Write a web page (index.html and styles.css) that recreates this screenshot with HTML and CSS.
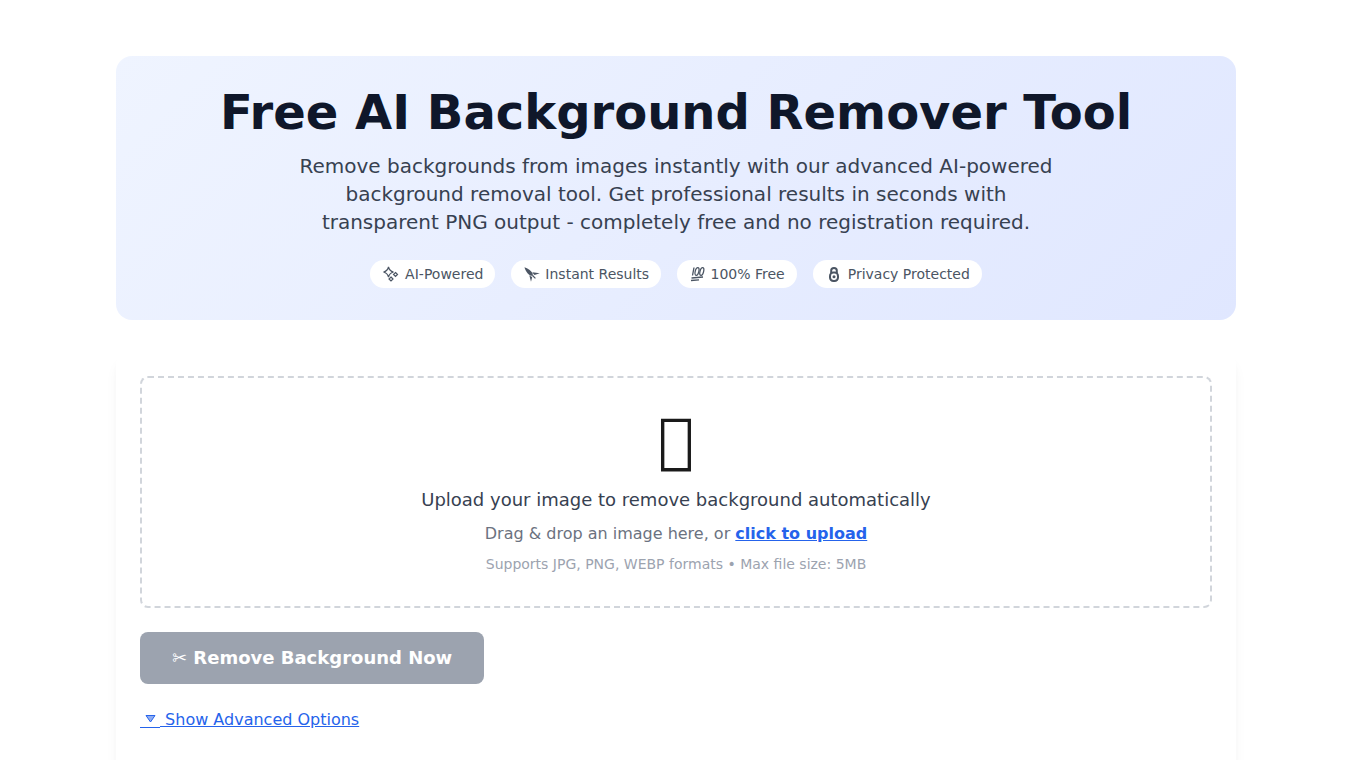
FILE: index.html
```html
<!DOCTYPE html>
<html lang="en">
<head>
<meta charset="utf-8">
<meta name="viewport" content="width=device-width, initial-scale=1.0">
<title>Free AI Background Remover Tool</title>
<link rel="stylesheet" href="styles.css">
</head>
<body>
<div class="page">
  <header class="hero">
    <h1>Free AI Background Remover Tool</h1>
    <p class="lead">Remove backgrounds from images instantly with our advanced AI-powered background removal tool. Get professional results in seconds with transparent PNG output - completely free and no registration required.</p>
    <div class="badges">
      <span class="badge"><svg class="ico ico-wide" viewBox="0 0 18.5 16" fill="none" stroke="currentColor" stroke-width="1.2"><path d="M6.500 1 Q7.500 5 11.500 6 Q7.500 7 6.500 11 Q5.500 7 1.500 6 Q5.500 5 6.500 1Z"/><path d="M13.500 6.500 L15.500 8.500 L13.500 10.500 L11.500 8.500Z"/><path d="M9 11 L11 13 L9 15 L7 13Z"/></svg> AI-Powered</span>
      <span class="badge"><svg class="ico ico-rocket" viewBox="0 0 17.500 16" fill="currentColor"><path d="M1.500 1.300 C4.500 2.200 8.500 4.800 10 8.200 L8.200 10 C4.800 8.500 2.200 4.500 1.500 1.300Z"/><path d="M9.300 6.300 L16.800 7.200 L11.500 9 L10.500 8Z"/><path d="M6.300 9.300 L8 15.700 L9.200 11 L8 10.500Z"/><path d="M9.800 8.800 L12.800 12 L12 12.800 L8.800 9.800Z"/></svg> Instant Results</span>
      <span class="badge"><svg class="ico" viewBox="0 0 17 16" fill="none" stroke="currentColor" stroke-width="1.300"><path d="M5 1.500 L3.500 9.500"/><ellipse cx="8" cy="5.500" rx="1.800" ry="4" transform="rotate(14 8 5.500)"/><ellipse cx="12.800" cy="5.500" rx="1.800" ry="4" transform="rotate(14 12.800 5.500)"/><path d="M2.500 12 L14 11"/><path d="M2 14.500 L10 13.800"/></svg> 100% Free</span>
      <span class="badge"><svg class="ico ico-lock" viewBox="0 0 18.500 16" fill="none" stroke="currentColor" stroke-width="2"><path d="M6.200 7 V4.500 C6.200 1 11.800 1 11.800 4.500 V7"/><rect x="5" y="6.500" width="8" height="8.500" rx="3.400"/><circle cx="9" cy="10.700" r="1.500" fill="currentColor" stroke="none"/></svg> Privacy Protected</span>
    </div>
  </header>
  <main class="card">
    <div class="dropzone">
      <div class="drop-icon">&#xE123;</div>
      <p class="drop-title">Upload your image to remove background automatically</p>
      <p class="drop-text">Drag &amp; drop an image here, or <a href="#" class="upload-link">click to upload</a></p>
      <p class="drop-note">Supports JPG, PNG, WEBP formats • Max file size: 5MB</p>
    </div>
    <button class="go-btn" type="button" disabled>&#x2702;&#xFE0E; Remove Background Now</button>
    <a href="#" class="adv-link"><svg class="ico-down" viewBox="0 0 20 15"><path d="M6 2.500 H15 L10.500 9Z" fill="#8fadf2" stroke="currentColor" stroke-width="1"/><path d="M0 14.500 H20" stroke="currentColor" stroke-width="1"/></svg> Show Advanced Options</a>
  </main>
</div>
</body>
</html>
```

FILE: styles.css
```css
* { box-sizing: border-box; }
html, body { height: 100%; }
body {
  margin: 0;
  background: #fff;
  color: #111827;
  font-family: "DejaVu Sans", sans-serif;
  overflow: hidden;
}
p { margin: 0; }
.page {
  width: 1120px;
  margin: 0 auto;
  padding-top: 56px;
}
.hero {
  height: 264px;
  padding: 32px;
  text-align: center;
  border-radius: 16px;
  background: linear-gradient(135deg, #eff4ff, #e0e7ff);
}
.hero h1 {
  margin: 0 0 16px;
  font-size: 48px;
  line-height: 48px;
  font-weight: 700;
  color: #0f172a;
}
.lead {
  max-width: 768px;
  margin: 0 auto 24px;
  font-size: 20px;
  line-height: 28px;
  color: #374151;
}
.badges {
  display: flex;
  justify-content: center;
  gap: 16px;
}
.badge {
  padding: 4px 12px;
  border-radius: 999px;
  background: #fff;
  font-size: 14px;
  line-height: 20px;
  color: #4b5563;
}
.ico {
  width: 17px;
  height: 16px;
  vertical-align: -3px;
}
.ico-wide { width: 18.5px; }
.ico-rocket { width: 17.5px; }
.ico-lock { width: 18.5px; }
.card {
  margin-top: 32px;
  padding: 24px;
  height: 600px;
  border-radius: 12px;
  background: #fff;
  box-shadow: 0 10px 15px -3px rgba(0, 0, 0, 0.06), 0 4px 6px -2px rgba(0, 0, 0, 0.03);
}
.dropzone {
  height: 232px;
  padding: 32px;
  text-align: center;
  border: 2px dashed #d1d5db;
  border-radius: 8px;
}
.drop-icon {
  font-size: 60px;
  line-height: 60px;
  margin-bottom: 16px;
  color: #1a1a1a;
}
.drop-title {
  font-size: 18px;
  line-height: 28px;
  color: #374151;
  margin-bottom: 8px;
}
.drop-text {
  font-size: 16px;
  line-height: 24px;
  color: #6b7280;
  margin-bottom: 8px;
}
.upload-link {
  font-weight: 700;
  color: #2563eb;
}
.drop-note {
  font-size: 14px;
  line-height: 20px;
  color: #9ca3af;
}
.go-btn {
  display: block;
  margin-top: 24px;
  padding: 0 32px 2px;
  height: 52px;
  border: 0;
  border-radius: 8px;
  background: #9ca3af;
  color: #fff;
  font-family: inherit;
  font-size: 18px;
  font-weight: 700;
}
.adv-link {
  display: inline-block;
  margin-top: 24px;
  font-size: 16px;
  line-height: 24px;
  color: #2563eb;
}
.ico-down {
  width: 20px;
  height: 15px;
  vertical-align: -3px;
}
```
